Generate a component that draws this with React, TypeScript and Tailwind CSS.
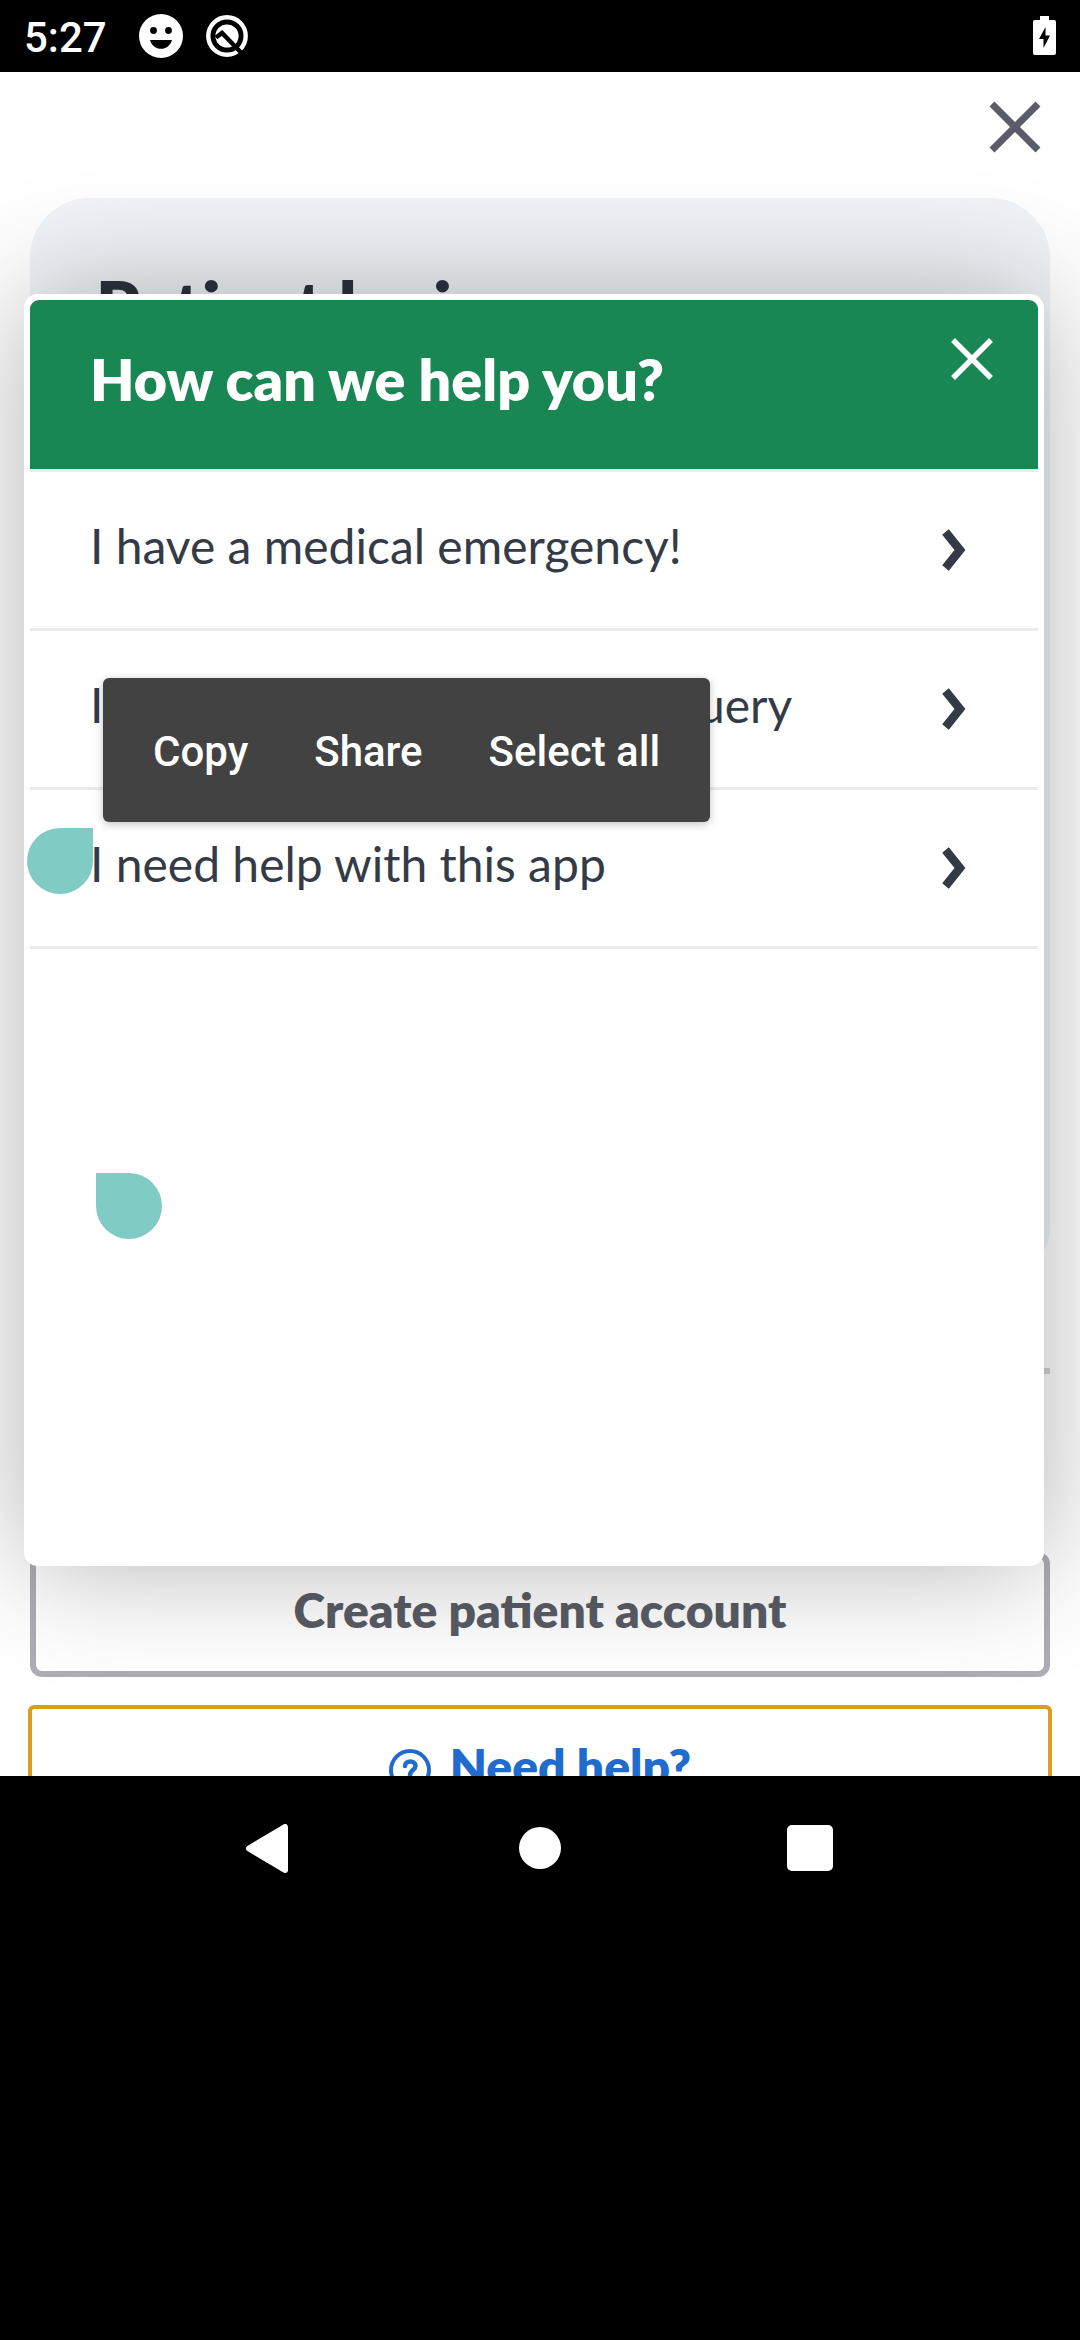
import React from "react";

const options: React.ReactNode[] = [
  "I have a medical emergency!",
  <>
    I have a <span className="tracking-[-0.8px]">non-urgent medical</span> query
  </>,
  "I need help with this app",
];

function StatusBar() {
  return (
    <header className="flex h-[72px] shrink-0 items-center bg-black pl-[24px] pr-[24px] text-white">
      <span className="w-[115px] pt-[3px] font-[Roboto,sans-serif] text-[42px] leading-[50px] font-medium">5:27</span>
      <svg className="-mt-[1px] h-[44px] w-[44px]" viewBox="0 0 44 44">
        <circle cx="22" cy="22" r="22" fill="#fff" />
        <circle cx="14.5" cy="16.5" r="3.4" />
        <circle cx="29.5" cy="16.5" r="3.4" />
        <path d="M11 26h22c-1.500 5.500-6 8.800-11 8.800S12.500 31.500 11 26z" />
      </svg>
      <svg className="-mt-[1px] ml-[22px] h-[44px] w-[44px]" viewBox="0 0 44 44">
        <circle cx="22" cy="22" r="18.7" fill="none" stroke="#fff" strokeWidth="4.4" />
        <circle cx="22" cy="22" r="11.6" fill="#fff" />
        <path d="M11 23.500l6-4.500L37.500 40" fill="none" stroke="#000" strokeWidth="4.4" />
      </svg>
      <svg className="-mt-[1px] ml-auto h-[39px] w-[23px]" viewBox="0 0 23 39">
        <path d="M7 0h9v4h5a2 2 0 0 1 2 2v31a2 2 0 0 1-2 2H2a2 2 0 0 1-2-2V6a2 2 0 0 1 2-2h5z" fill="#fff" />
        <path d="M12.500 11L6 23h4.500v9L17 19.500h-4.500z" fill="#000" />
      </svg>
    </header>
  );
}

function LoginPage() {
  return (
    <main className="flex flex-col px-[30px] text-[48px] leading-[60px] font-extrabold">
      <div className="flex h-[126px] items-start justify-end pt-[29px] pr-[9px]">
        <svg className="h-[52px] w-[52px]" viewBox="0 0 52 52">
          <path d="M3 3l46 46M49 3L3 49" stroke="#5a5d69" strokeWidth="7" />
        </svg>
      </div>
      <section className="h-[1087px] rounded-[60px] bg-[#f0f4f8] px-[66px] pt-[65px] text-[69px] leading-[84px] text-[#2d323f]">
        <h1>Patient login</h1>
      </section>
      <hr className="mt-[83px] h-[6px] border-0 bg-[#d4d4d6]" />
      <button className="mt-[178px] flex h-[125px] items-center justify-center rounded-[12px] border-[6px] border-[#acaeb3] bg-white text-[#5a5d66]">
        <span className="-mt-[9px]">Create patient account</span>
      </button>
      <button className="-mx-[2px] mt-[28px] flex h-[130px] items-start justify-center gap-[19px] rounded-[6px] border-[4px] border-[#dc9c20] bg-white pt-[27px] text-[#1f6bce]">
        <svg className="mt-[13px] h-[42px] w-[42px]" viewBox="0 0 42 42" fill="none" stroke="#1f6bce">
          <circle cx="21" cy="21" r="19" strokeWidth="4" />
          <path d="M16 17c0-6 10.500-6 10.500 0 0 4-5.500 4-5.500 9" strokeWidth="4.500" strokeLinecap="round" />
          <circle cx="21" cy="31" r="1" strokeWidth="3" />
        </svg>
        <span>Need help?</span>
      </button>
    </main>
  );
}

function HelpDialog() {
  return (
    <div className="absolute top-[222px] left-[24px] h-[1272px] w-[1020px] rounded-[14px] border-[6px] border-white bg-white text-[#343b47] shadow-[0_0_120px_rgba(0,0,0,0.3)]">
      <div className="flex h-[172px] justify-between rounded-t-[9px] border-b-[3px] border-[#ebebeb] bg-[#198754] bg-clip-padding pt-[38px] pr-[45px] pl-[60px] text-white">
        <h2 className="pt-[6px] text-[57.400px] leading-[70px] font-extrabold">How can we help you?</h2>
        <svg className="h-[42px] w-[42px]" viewBox="0 0 42 42">
          <path d="M2 2l38 38M40 2L2 40" stroke="#fff" strokeWidth="5.500" />
        </svg>
      </div>
      {options.map((label, index) => (
        <div key={index} className="flex h-[159px] items-center justify-between border-b-[3px] border-[#ebebeb] pr-[72px] pl-[60px]">
          <span className="-mt-[9px] text-[48px] leading-[60px]">{label}</span>
          <svg className="h-[42px] w-[24px]" viewBox="0 0 24 42">
            <path d="M3.500 3l14.500 18L3.500 39" fill="none" stroke="#343b47" strokeWidth="8.500" />
          </svg>
        </div>
      ))}
    </div>
  );
}

function SelectionToolbar() {
  return (
    <div className="absolute top-[606px] left-[103px] flex h-[144px] w-[607px] items-center gap-[66px] rounded-[6px] bg-[#424242] pt-[4px] pl-[50px] font-[Roboto,sans-serif] text-[42px] leading-[50px] font-medium whitespace-nowrap text-white shadow-[0_2px_8px_rgba(0,0,0,0.25)]">
      <span>Copy</span>
      <span>Share</span>
      <span>Select all</span>
    </div>
  );
}

export default function App() {
  return (
    <div className="flex h-[2340px] w-[1080px] flex-col overflow-hidden bg-black font-[Lato,sans-serif]">
      <StatusBar />
      <div className="relative h-[1704px] shrink-0 overflow-hidden bg-white">
        <LoginPage />
        <HelpDialog />
        <SelectionToolbar />
        <div className="absolute top-[756px] left-[27px] h-[66px] w-[66px] rounded-full rounded-tr-none bg-[#80cbc4]" />
        <div className="absolute top-[1101px] left-[96px] h-[66px] w-[66px] rounded-full rounded-tl-none bg-[#80cbc4]" />
      </div>
      <nav className="flex h-[144px] items-center justify-between pr-[247px] pl-[246px]">
        <svg className="h-[49px] w-[42px]" viewBox="0 0 42 49">
          <path d="M3 24.500L39 3v43z" fill="#fff" stroke="#fff" strokeWidth="6" strokeLinejoin="round" />
        </svg>
        <div className="ml-[5px] h-[42px] w-[42px] rounded-full bg-white" />
        <div className="h-[46px] w-[46px] rounded-[5px] bg-white" />
      </nav>
    </div>
  );
}
